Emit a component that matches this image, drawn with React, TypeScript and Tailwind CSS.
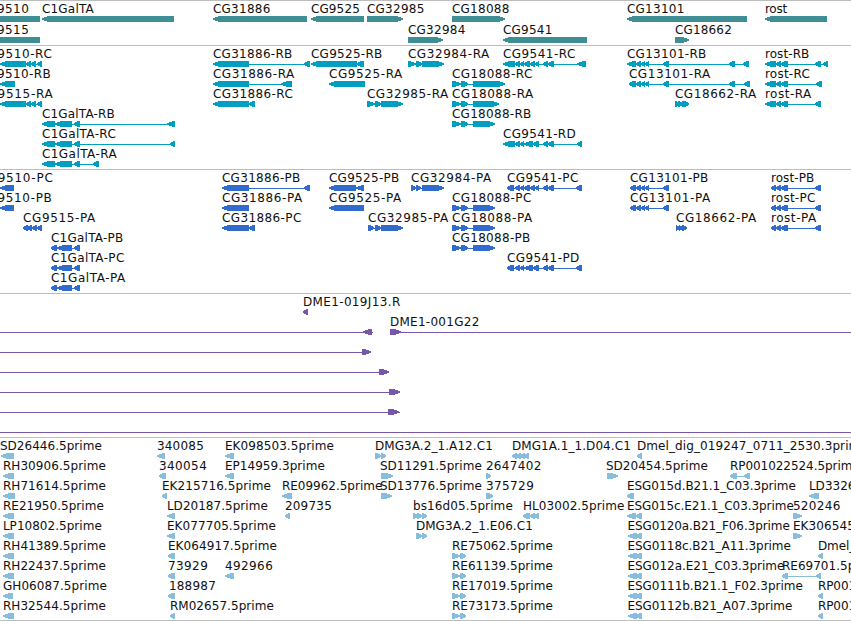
import React from "react";

type Dir = "L" | "R";
type Seg = [number, number];
type Feature = {
  row: number;
  label?: string;
  // left and right edge of the label
  at?: [number, number];
  dir: Dir | "N";
  segs: Seg[];
  // connecting line, when it reaches past the segments
  shaft?: Seg;
};

const f = (
  row: number,
  label: string,
  from: number,
  to: number,
  dir: Dir | "N",
  segs: Seg[],
): Feature => ({ row, label, at: [from, to], dir, segs });

const genes: Feature[] = [
  f(0, "CG9510", -21, 28, "N", [[0, 40]]),
  f(0, "C1GalTA", 42.5, 93, "L", [[42, 174]]),
  f(0, "CG31886", 213.5, 269.5, "L", [[213, 307]]),
  f(0, "CG9525", 311.5, 359, "L", [[311, 364]]),
  f(0, "CG32985", 367.5, 423.5, "R", [[367, 403]]),
  f(0, "CG18088", 452.5, 508.5, "R", [[452, 505]]),
  f(0, "CG13101", 627.5, 683.5, "L", [[627, 747]]),
  f(0, "rost", 765.5, 786.5, "L", [[765, 827]]),
  f(1, "CG9515", -21, 28, "N", [[0, 40]]),
  f(1, "CG32984", 408.5, 464.5, "R", [[408, 443]]),
  f(1, "CG9541", 503.5, 551.5, "L", [[503, 587]]),
  f(1, "CG18662", 675.5, 731, "R", [[675, 689]]),
];

const s9510: Seg[] = [[0, 26], [26, 31], [31, 36], [37, 42]];
const gal: Seg[] = [[42, 55], [55, 72], [74, 80]];
const s9541: Seg[] = [[515, 520], [520, 524]];
const s9541mid: Seg[] = [[524, 530], [530, 535], [535, 539]];
const s9541wide: Seg[] = [[524, 533], [533, 539]];
const s9541end: Seg[] = [[543, 548], [548, 554]];
const s13101: Seg[] = [[636, 641], [641, 645], [645, 649], [663, 669]];
const s18088: Seg[] = [[452, 461], [461, 468]];
const rost: Seg[] = [[776, 781], [781, 788]];

const transcripts: Feature[] = [
  f(0, "CG9510-RC", -21, 51, "L", s9510),
  f(1, "CG9510-RB", -21, 50, "L", [[0, 15]]),
  f(2, "CG9515-RA", -21, 52, "L", s9510),
  f(3, "C1GalTA-RB", 42.5, 114, "L", [...gal, [167, 175]]),
  f(4, "C1GalTA-RC", 42.5, 115, "L", [...gal, [170, 175]]),
  f(5, "C1GalTA-RA", 42.5, 116, "L", [...gal, [93, 99]]),
  f(0, "CG31886-RB", 213.5, 291.5, "L", [[213, 249], [304, 310]]),
  f(1, "CG31886-RA", 213.5, 293.5, "L", [[213, 249], [281, 292]]),
  f(2, "CG31886-RC", 213.5, 292, "L", [[213, 249], [249, 255]]),
  f(0, "CG9525-RB", 311.5, 381.5, "L", [[311, 357], [357, 364]]),
  f(1, "CG9525-RA", 329.5, 401.5, "L", [[329, 365]]),
  f(2, "CG32985-RA", 367.5, 447.5, "R", [[367, 375], [375, 381], [381, 403]]),
  f(0, "CG32984-RA", 408.5, 488.5, "R", [[408, 416], [416, 422], [422, 444]]),
  f(0, "CG9541-RC", 503.5, 574.5, "L", [[503, 515], ...s9541, ...s9541mid, ...s9541end, [577, 586]]),
  f(1, "CG18088-RC", 452.5, 531.5, "R", [...s18088, [473, 505]]),
  f(2, "CG18088-RA", 452.5, 532.5, "R", [...s18088, [473, 499]]),
  f(3, "CG18088-RB", 452.5, 530.5, "R", [...s18088, [473, 495]]),
  f(4, "CG9541-RD", 503.5, 575, "L", [[503, 515], ...s9541, ...s9541wide, ...s9541end, [577, 582]]),
  f(0, "CG13101-RB", 627.5, 705.5, "L", [[627, 636], ...s13101, [729, 735], [743, 749]]),
  f(1, "CG13101-RA", 629.5, 709.5, "L", [[629, 636], ...s13101, [729, 735], [744, 750]]),
  f(2, "CG18662-RA", 675.5, 755.5, "R", [[675, 680], [678, 683], [682, 689]]),
  f(0, "rost-RB", 765.5, 808.5, "L", [[765, 776], ...rost, [815, 821], [823, 828]]),
  f(1, "rost-RC", 765.5, 809, "L", [[765, 776], ...rost, [816, 822]]),
  f(2, "rost-RA", 765.5, 810.5, "L", [[765, 776], ...rost, [815, 821]]),
];

const galP: Seg[] = [[51, 57], [57, 72], [74, 80]];

const proteins: Feature[] = [
  f(0, "CG9510-PC", -21, 52, "L", [[0, 14]]),
  f(1, "CG9510-PB", -21, 51, "L", [[0, 14]]),
  f(2, "CG9515-PA", 23.5, 94.5, "L", [[23, 28], [27, 32], [32, 37], [37, 42]]),
  f(3, "C1GalTA-PB", 51.5, 122.5, "L", galP),
  f(4, "C1GalTA-PC", 51.5, 123.5, "L", galP),
  f(5, "C1GalTA-PA", 51.5, 124.5, "L", galP),
  f(0, "CG31886-PB", 222.5, 299.5, "L", [[222, 249], [304, 310]]),
  f(1, "CG31886-PA", 222.5, 301.5, "L", [[222, 249]]),
  f(2, "CG31886-PC", 222.5, 300.5, "L", [[222, 249], [249, 255]]),
  f(0, "CG9525-PB", 329.5, 398.5, "L", [[329, 356], [356, 364]]),
  f(1, "CG9525-PA", 329.5, 400.5, "L", [[329, 364]]),
  f(2, "CG32985-PA", 368.5, 447.5, "R", [[368, 374], [375, 381], [381, 403]]),
  f(0, "CG32984-PA", 411.5, 490.5, "R", [[411, 416], [416, 421], [422, 444]]),
  f(0, "CG9541-PC", 507.5, 577.5, "L", [[507, 514], ...s9541, ...s9541mid, ...s9541end, [576, 582]]),
  f(1, "CG18088-PC", 452.5, 530.5, "R", [...s18088, [473, 495]]),
  f(2, "CG18088-PA", 452.5, 531.5, "R", [...s18088, [473, 495]]),
  f(3, "CG18088-PB", 452.5, 529.5, "R", [...s18088, [473, 495]]),
  f(4, "CG9541-PD", 507.5, 578.5, "L", [[507, 514], ...s9541, ...s9541wide, ...s9541end, [576, 582]]),
  f(0, "CG13101-PB", 630.5, 707.5, "L", [[630, 636], ...s13101]),
  f(1, "CG13101-PA", 630.5, 709.5, "L", [[630, 636], ...s13101]),
  f(2, "CG18662-PA", 676.5, 755.5, "R", [[676, 680], [679, 683], [682, 687]]),
  f(0, "rost-PB", 771.5, 813.5, "L", [[771, 776], ...rost, [815, 821]]),
  f(1, "rost-PC", 771.5, 814.5, "L", [[771, 776], ...rost, [815, 821]]),
  f(2, "rost-PA", 771.5, 815.5, "L", [[771, 776], ...rost, [815, 821]]),
];

const clones: Feature[] = [
  f(0, "DME1-019J13.R", 303.5, 399.5, "L", [[303, 308]]),
  { row: 1, dir: "L", segs: [[363, 372]], shaft: [0, 373] },
  { ...f(1, "DME1-001G22", 390.5, 478.5, "R", [[390, 401]]), shaft: [390, 851] },
  { row: 2, dir: "R", segs: [[362, 371]], shaft: [0, 371] },
  { row: 3, dir: "R", segs: [[379, 389]], shaft: [0, 389] },
  { row: 4, dir: "R", segs: [[389, 400]], shaft: [0, 400] },
  { row: 5, dir: "R", segs: [[388, 399]], shaft: [0, 400] },
  { row: 6, dir: "N", segs: [], shaft: [0, 851] },
];

const re: Seg[] = [[452, 460], [460, 466]];
const esg: Seg[] = [[628, 637], [636, 642]];

const ests: Feature[] = [
  f(0, "SD26446.5prime", 0.5, 101, "L", [[1, 14]]),
  f(1, "RH30906.5prime", 3.5, 105, "L", [[3, 14]]),
  f(2, "RH71614.5prime", 3.5, 105, "L", [[3, 15]]),
  f(3, "RE21950.5prime", 3.5, 103, "L", [[3, 14]]),
  f(4, "LP10802.5prime", 3.5, 101, "L", [[3, 14]]),
  f(5, "RH41389.5prime", 3.5, 105, "L", [[3, 14]]),
  f(6, "RH22437.5prime", 3.5, 105, "L", [[3, 14]]),
  f(7, "GH06087.5prime", 3.5, 106, "L", [[3, 13]]),
  f(8, "RH32544.5prime", 3.5, 105, "L", [[3, 14]]),
  f(0, "340085", 157.5, 203, "L", [[157, 165]]),
  f(1, "340054", 159.5, 206, "L", [[159, 166]]),
  f(2, "EK215716.5prime", 162.5, 270, "L", [[162, 167]]),
  f(3, "LD20187.5prime", 167.5, 267, "L", [[167, 175]]),
  f(4, "EK077705.5prime", 167.5, 275, "L", [[167, 175]]),
  f(5, "EK064917.5prime", 168.5, 276, "L", [[168, 175]]),
  f(6, "73929", 168.5, 207, "L", [[168, 175]]),
  f(7, "188987", 169.5, 215, "L", [[168, 175]]),
  f(8, "RM02657.5prime", 170.5, 273, "L", [[170, 175]]),
  f(0, "EK098503.5prime", 225.5, 333, "L", [[225, 234]]),
  f(1, "EP14959.3prime", 225.5, 324, "L", [[225, 234]]),
  f(2, "RE09962.5prime", 282.5, 381.5, "L", [[282, 292]]),
  f(3, "209735", 285.5, 331, "L", [[285, 290]]),
  f(6, "492966", 225.5, 272, "L", [[225, 234]]),
  f(0, "DMG3A.2_1.A12.C1", 375.5, 492, "R", [[375, 381], [381, 386]]),
  f(1, "SD11291.5prime", 380.5, 481, "R", [[381, 393]]),
  f(2, "SD13776.5prime", 380.5, 481, "R", [[381, 392]]),
  f(3, "bs16d05.5prime", 413.5, 512, "R", [[413, 418], [417, 422], [422, 427]]),
  f(4, "DMG3A.2_1.E06.C1", 416.5, 532, "R", [[416, 422], [422, 427]]),
  f(5, "RE75062.5prime", 452.5, 552, "R", re),
  f(6, "RE61139.5prime", 452.5, 552, "R", re),
  f(7, "RE17019.5prime", 452.5, 552, "R", re),
  f(8, "RE73173.5prime", 452.5, 552, "R", re),
  f(1, "2647402", 486.5, 540.5, "R", [[486, 491]]),
  f(2, "375729", 486.5, 533, "R", [[486, 493]]),
  f(0, "DMG1A.1_1.D04.C1", 512.5, 630, "L", [[512, 517], [516, 521], [520, 525], [524, 529]]),
  f(3, "HL03002.5prime", 523.5, 623.5, "L", [[523, 530], [530, 535], [534, 539]]),
  f(1, "SD20454.5prime", 606.5, 707, "R", [[607, 618]]),
  f(0, "Dmel_dig_019247_0711_2530.3prime", 637.5, 867, "L", [[637, 642]]),
  f(1, "RP001022524.5prime", 730.5, 859, "L", [[730, 737], [744, 750]]),
  f(2, "ESG015d.B21.1_C03.3prime", 627.5, 795, "L", [[627, 634]]),
  f(2, "LD33268.5prime", 809.5, 909, "L", [[809, 819]]),
  f(3, "ESG015c.E21.1_C03.3prime", 627.5, 793, "L", [[627, 636], [636, 642]]),
  f(3, "520246", 793.5, 839.5, "R", [[793, 802]]),
  f(4, "ESG0120a.B21_F06.3prime", 628, 789, "L", esg),
  f(4, "EK306545.5prime", 793.5, 901, "R", [[793, 802]]),
  f(5, "ESG0118c.B21_A11.3prime", 628, 790, "L", esg),
  f(5, "Dmel_dig", 818.5, 873, "L", [[818, 823]]),
  f(6, "ESG012a.E21_C03.3prime", 628, 783.5, "L", esg),
  f(6, "RE69701.5prime", 782.5, 882, "L", [[782, 788], [816, 821]]),
  f(7, "ESG0111b.B21.1_F02.3prime", 628, 802, "L", esg),
  f(7, "RP00178", 818.5, 870.5, "L", [[818, 823]]),
  f(8, "ESG0112b.B21_A07.3prime", 628, 791.5, "L", esg),
  f(8, "RP00178", 818.5, 870.5, "L", [[818, 823]]),
];

// The head of a segment narrows in whole-pixel steps toward a two-pixel tip.
function shape(dir: Dir | "N", [a, b]: Seg, y: number): string {
  if (dir === "N") return `M${a} ${y}H${b}V${y + 6}H${a}Z`;
  const small = b - a < 8;
  const s1 = small ? 1 : 2;
  const s2 = small ? 3 : 5;
  if (dir === "L")
    return `M${a} ${y + 2}H${a + s1}V${y + 1}H${a + s2}V${y}H${b}V${y + 6}H${a + s2}V${y + 5}H${a + s1}V${y + 4}H${a}Z`;
  return `M${b} ${y + 2}H${b - s1}V${y + 1}H${b - s2}V${y}H${a}V${y + 6}H${b - s2}V${y + 5}H${b - s1}V${y + 4}H${b}Z`;
}

type TrackProps = {
  features: Feature[];
  color: string;
  height: string;
  pitch?: number;
  // label baseline of the first row, below the top rule
  baseline: number;
};

function Track({ features, color, height, pitch = 20, baseline }: TrackProps) {
  return (
    <section className={`w-full shrink-0 overflow-hidden border-t border-[#bdbdbd] ${height}`}>
      <svg className={`block h-full w-full ${color}`} fill="currentColor">
        {features.map((item, i) => {
          const base = baseline + item.row * pitch;
          const top = base + 3;
          const segs = item.segs;
          const line: Seg | undefined =
            item.shaft ?? (segs.length > 1 ? [segs[0][0] + 1, segs[segs.length - 1][1] - 1] : undefined);
          return (
            <g key={i}>
              <g shapeRendering="crispEdges">
                {line && <rect x={line[0]} y={top + 3} width={line[1] - line[0]} height={1} />}
                {segs.map((seg, k) => (
                  <path key={k} d={shape(item.dir, seg, top)} />
                ))}
              </g>
              {item.label && item.at && (
                <text
                  x={item.at[0] - 0.6}
                  y={base}
                  textLength={item.at[1] - item.at[0] + 1.4}
                  lengthAdjust="spacing"
                  className="fill-[#101010] font-['DejaVu_Sans',sans-serif] text-[12px]"
                >
                  {item.label}
                </text>
              )}
            </g>
          );
        })}
      </svg>
    </section>
  );
}

export default function App() {
  return (
    <main className="flex h-[621px] w-[851px] flex-col overflow-hidden border-b border-[#bdbdbd] bg-white">
      <Track features={genes} color="text-[#408e95]" height="h-[45px]" pitch={21} baseline={12} />
      <Track features={transcripts} color="text-[#009fc0]" height="h-[124px]" baseline={12} />
      <Track features={proteins} color="text-[#316bcd]" height="h-[124px]" baseline={12} />
      <Track features={clones} color="text-[#7657a8]" height="h-[144px]" baseline={12} />
      <Track features={ests} color="text-[#89bddd]" height="h-[183px]" baseline={12} />
    </main>
  );
}
